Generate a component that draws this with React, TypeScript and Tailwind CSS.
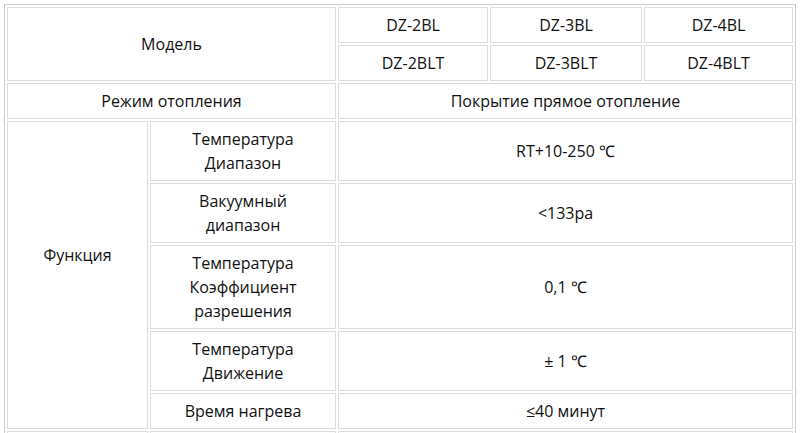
const cell = 'border border-[#ddd] px-2 py-[5px] text-center align-middle';

export default function App() {
  return (
    <div className="min-h-screen bg-white pl-1 pt-1 font-['Open_Sans',sans-serif] text-base leading-6 text-[#111]">
      <table className="w-[792px] table-fixed border-separate border-spacing-[2px] border border-[#ccc]">
        <colgroup>
          <col className="w-[141px]" />
          <col className="w-[186px]" />
          <col className="w-[150px]" />
          <col className="w-[152px]" />
          <col className="w-[149px]" />
        </colgroup>
        <tbody>
          <tr>
            <td className={cell} colSpan={2} rowSpan={2}>Модель</td>
            <td className={`${cell} py-[4px]`}>DZ-2BL</td>
            <td className={`${cell} py-[4px]`}>DZ-3BL</td>
            <td className={`${cell} py-[4px]`}>DZ-4BL</td>
          </tr>
          <tr>
            <td className={cell}>DZ-2BLT</td>
            <td className={cell}>DZ-3BLT</td>
            <td className={cell}>DZ-4BLT</td>
          </tr>
          <tr>
            <td className={cell} colSpan={2}>Режим отопления</td>
            <td className={cell} colSpan={3}>Покрытие прямое отопление</td>
          </tr>
          <tr>
            <td className={`${cell} pb-[45px]`} rowSpan={5}>Функция</td>
            <td className={cell}>Температура<br />Диапазон</td>
            <td className={cell} colSpan={3}>RT+10-250 ℃</td>
          </tr>
          <tr>
            <td className={cell}>Вакуумный<br />диапазон</td>
            <td className={cell} colSpan={3}>&lt;133pa</td>
          </tr>
          <tr>
            <td className={cell}>Температура<br />Коэффициент<br />разрешения</td>
            <td className={cell} colSpan={3}>0,1 ℃</td>
          </tr>
          <tr>
            <td className={cell}>Температура<br />Движение</td>
            <td className={cell} colSpan={3}>± 1 ℃</td>
          </tr>
          <tr>
            <td className={cell}>Время нагрева</td>
            <td className={cell} colSpan={3}>≤40 минут</td>
          </tr>
          <tr>
            <td className={cell}>&nbsp;</td>
            <td className={cell}>&nbsp;</td>
            <td className={cell} colSpan={3}>&nbsp;</td>
          </tr>
        </tbody>
      </table>
    </div>
  );
}
